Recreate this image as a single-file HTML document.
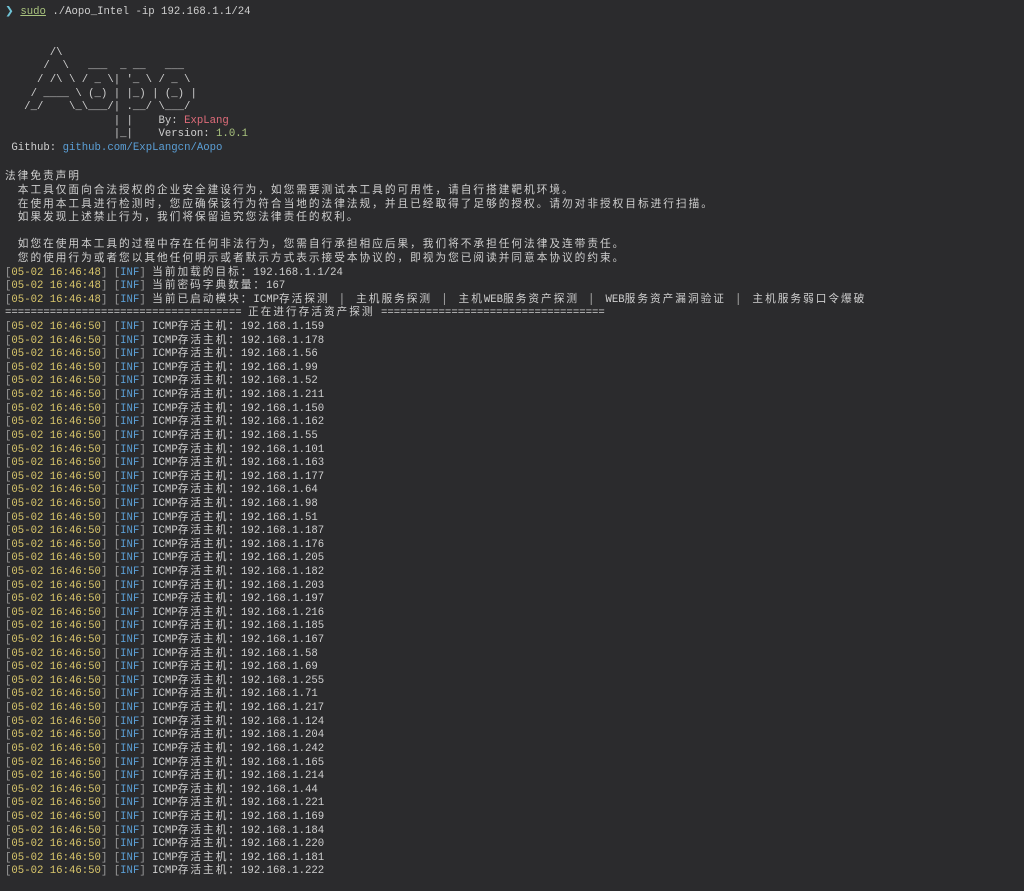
<!DOCTYPE html>
<html><head><meta charset="utf-8"><style>
html,body{margin:0;padding:0;background:#2b2b2d;width:1024px;height:888px;overflow:hidden}
#t{position:absolute;left:5px;top:6px;font-family:"Liberation Mono","Noto Sans CJK SC",monospace;font-size:10.67px;line-height:13.62px;color:#cfcfcf;white-space:pre}
#t div{height:13.62px;line-height:13.62px;overflow:visible}
b{font-weight:normal;font-family:"Noto Sans CJK SC",sans-serif;letter-spacing:2.0px;line-height:13.62px}
.y{color:#d9c66b}.g{color:#9a9a9a}.bl{color:#5b9fd6}.r{color:#e06c7a}.gr{color:#a9c37e}.cy{color:#6fc3d6}
</style></head><body><div id="t"><span class="cy">❯</span> <span style="color:#a9c37e;text-decoration:underline">sudo</span> ./Aopo_Intel -ip 192.168.1.1/24


       /\
      /  \   ___  _ __   ___
     / /\ \ / _ \| '_ \ / _ \
    / ____ \ (_) | |_) | (_) |
   /_/    \_\___/| .__/ \___/
                 | |    By: <span class="r">ExpLang</span>
                 |_|    Version: <span class="gr">1.0.1</span>
 Github: <span class="bl">github.com/ExpLangcn/Aopo</span>

<b>法律免责声明</b>
  <b>本工具仅面向合法授权的企业安全建设行为，如您需要测试本工具的可用性，请自行搭建靶机环境。</b>
  <b>在使用本工具进行检测时，您应确保该行为符合当地的法律法规，并且已经取得了足够的授权。请勿对非授权目标进行扫描。</b>
  <b>如果发现上述禁止行为，我们将保留追究您法律责任的权利。</b>

  <b>如您在使用本工具的过程中存在任何非法行为，您需自行承担相应后果，我们将不承担任何法律及连带责任。</b>
  <b>您的使用行为或者您以其他任何明示或者默示方式表示接受本协议的，即视为您已阅读并同意本协议的约束。</b>
<span class="g">[</span><span class="y">05-02 16:46:48</span><span class="g">]</span> <span class="g">[</span><span class="bl">INF</span><span class="g">]</span> <b>当前加载的目标：</b>192.168.1.1/24
<span class="g">[</span><span class="y">05-02 16:46:48</span><span class="g">]</span> <span class="g">[</span><span class="bl">INF</span><span class="g">]</span> <b>当前密码字典数量：</b>167
<span class="g">[</span><span class="y">05-02 16:46:48</span><span class="g">]</span> <span class="g">[</span><span class="bl">INF</span><span class="g">]</span> <b>当前已启动模块：</b>ICMP<b>存活探测</b> <b> | </b> <b>主机服务探测</b> <b> | </b> <b>主机</b>WEB<b>服务资产探测</b> <b> | </b> WEB<b>服务资产漏洞验证</b> <b> | </b> <b>主机服务弱口令爆破</b>
===================================== <b>正在进行存活资产探测</b> ===================================
</div>
<script>
var ips=[159,178,56,99,52,211,150,162,55,101,163,177,64,98,51,187,176,205,182,203,197,216,185,167,58,69,255,71,217,124,204,242,165,214,44,221,169,184,220,181,222];
var t=document.getElementById('t');
var h=t.innerHTML;
for(var i=0;i<ips.length;i++){h+='<span class="g">[</span><span class="y">05-02 16:46:50</span><span class="g">]</span> <span class="g">[</span><span class="bl">INF</span><span class="g">]</span> ICMP<b>存活主机：</b>192.168.1.'+ips[i]+'\n';}
var ls=h.split('\n');var o='';
for(var j=0;j<ls.length;j++){o+='<div>'+(ls[j]||' ')+'</div>';}
t.innerHTML=o;
</script></body></html>
